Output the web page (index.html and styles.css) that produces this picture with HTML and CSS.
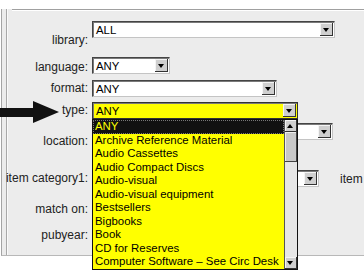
FILE: index.html
```html
<!DOCTYPE html>
<html>
<head>
  <meta charset="utf-8">
  <title>Catalog search</title>
  <link rel="stylesheet" href="styles.css">
</head>
<body>
  <div class="frame">
    <div class="panel">
      <div class="rule"></div>
      <div class="form">
        <div class="label pad-lib">library:</div>
        <div class="field">
          <div class="select w-lib"><span>ALL</span><i class="btn"></i></div>
        </div>

        <div class="label pad-lang">language:</div>
        <div class="field">
          <div class="select w-lang"><span>ANY</span><i class="btn"></i></div>
        </div>

        <div class="label pad-1">format:</div>
        <div class="field">
          <div class="select w-format"><span>ANY</span><i class="btn"></i></div>
        </div>

        <div class="label pad-1">type:</div>
        <div class="field">
          <div class="select w-type open"><span>ANY</span><i class="btn"></i>
            <div class="list">
              <div class="items">
                <div class="item sel">ANY</div>
                <div class="item">Archive Reference Material</div>
                <div class="item">Audio Cassettes</div>
                <div class="item">Audio Compact Discs</div>
                <div class="item">Audio-visual</div>
                <div class="item">Audio-visual equipment</div>
                <div class="item">Bestsellers</div>
                <div class="item">Bigbooks</div>
                <div class="item">Book</div>
                <div class="item">CD for Reserves</div>
                <div class="item">Computer Software &ndash; See Circ Desk</div>
              </div>
              <div class="scroll">
                <i class="sbtn up"></i>
                <i class="thumb"></i>
                <i class="track"></i>
                <i class="sbtn down"></i>
              </div>
            </div>
          </div>
        </div>

        <div class="label pad-loc">location:</div>
        <div class="field">
          <div class="select w-loc"><span>ANY</span><i class="btn"></i></div>
        </div>

        <div class="label pad-1">item category1:</div>
        <div class="field row">
          <div class="select w-cat"><span>ANY</span><i class="btn"></i></div>
          <span class="more">item</span>
        </div>

        <div class="label">match on:</div>
        <div class="field"></div>

        <div class="label">pubyear:</div>
        <div class="field"></div>
      </div>
    </div>
  </div>

  <svg class="pointer" width="60" height="24" viewBox="0 0 60 24">
    <rect x="0" y="7" width="35" height="9" fill="#111"/>
    <polygon points="33,0 59,11 33,22" fill="#111"/>
  </svg>
</body>
</html>
```

FILE: styles.css
```css
body {
  margin: 0;
  min-height: 275px;
  background: #fff;
  font-family: "Liberation Sans", Arial, sans-serif;
  font-size: 12px;
  color: #000;
}

/* outer frame, two grey lines on the left */
.frame {
  margin-left: 1px;
  height: 246px;
  padding-left: 4px;
  border-left: 1px solid #a4a4a4;
  border-bottom: 1px solid #b8b8b8;
  background: #ececec;
}

.panel {
  height: 100%;
  border-left: 1px solid #a8a8a8;
  box-shadow: inset 1px 0 #fafafa;
}

.rule {
  margin: 9px 0 0 5px;
  border-top: 1px solid #a0a0a0;
  border-bottom: 1px solid #fff;
}

.form {
  display: grid;
  grid-template-columns: 81px 1fr;
  grid-template-rows: 36px 23px 22px 21px 47px 32px 26px 20px;
  column-gap: 4px;
  padding-top: 10px;
}

.label {
  display: flex;
  justify-content: flex-end;
  white-space: nowrap;
  line-height: 14px;
  color: #222;
}

.pad-lib { padding-top: 12px; }
.pad-lang { padding-top: 3px; }
.pad-1 { padding-top: 1px; }
.pad-loc { padding-top: 11px; }

.field {
  position: relative;
}

.row {
  display: flex;
  align-items: flex-start;
}

.more {
  margin-left: 21px;
  padding-top: 2px;
  line-height: 14px;
  color: #222;
}

/* combo boxes */
.select {
  position: relative;
  display: flex;
  height: 17px;
  box-sizing: border-box;
  border: 1px solid;
  border-color: #444 #c4c4c4 #c4c4c4 #444;
  box-shadow: inset 1px 1px #7a7a7a;
  background: #fff;
  font-size: 11.4px;
}

.select span {
  flex: 1;
  padding: 1px 0 0 3px;
  line-height: 14px;
}

.btn {
  position: relative;
  width: 12px;
  margin: 1px 1px 1px 0;
  background: #cfcfcf;
  border-right: 1px solid #333;
  border-bottom: 1px solid #333;
  box-shadow: inset 1px 1px #f4f4f4;
}

.btn::after {
  content: "";
  position: absolute;
  left: 3px;
  top: 5px;
  border-top: 4px solid #000;
  border-left: 3px solid transparent;
  border-right: 3px solid transparent;
}

.w-lib { width: 243px; }
.w-lang { width: 78px; }
.w-format { width: 185px; }
.w-type { width: 206px; height: 17px; background: #ff0; border-color: #333; }
.w-loc { width: 241px; }
.w-cat { width: 227px; }

/* open dropdown of the type box */
.list {
  position: absolute;
  left: -1px;
  top: 16px;
  z-index: 2;
  display: flex;
  width: 206px;
  height: 151px;
  box-sizing: border-box;
  border: 1px solid #111;
  background: #ff0;
}

.items {
  flex: 1;
  overflow: hidden;
}

.item {
  height: 13.5px;
  padding-left: 2px;
  line-height: 13px;
  white-space: nowrap;
}

.item.sel {
  background: #111;
  color: #ff0;
  outline: 1px dotted #777;
  outline-offset: -1px;
}

.scroll {
  display: flex;
  flex-direction: column;
  width: 12px;
  border-left: 1px solid #555;
  background: #e6e6e6;
}

.sbtn {
  position: relative;
  height: 12px;
  box-sizing: border-box;
  background: #cfcfcf;
  border-right: 1px solid #333;
  border-bottom: 1px solid #333;
  box-shadow: inset 1px 1px #f4f4f4;
}

.sbtn::after {
  content: "";
  position: absolute;
  left: 2px;
  top: 4px;
  border-left: 3px solid transparent;
  border-right: 3px solid transparent;
}

.up::after { border-bottom: 4px solid #000; }
.down::after { border-top: 4px solid #000; }

.thumb {
  height: 30px;
  box-sizing: border-box;
  background: #c8c8c8;
  border-right: 1px solid #444;
  border-bottom: 1px solid #444;
  box-shadow: inset 1px 1px #eee;
}

.track {
  flex: 1;
}

.pointer {
  position: absolute;
  left: 0;
  top: 101px;
}
```
